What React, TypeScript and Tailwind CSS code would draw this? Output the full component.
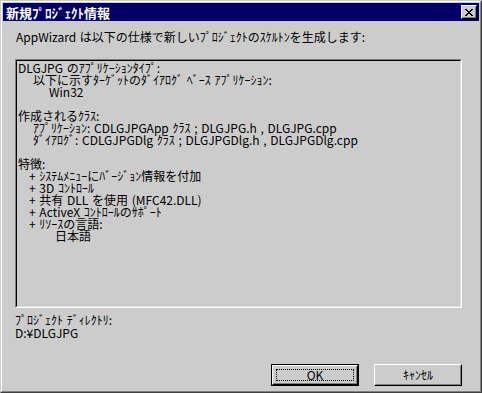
import React from "react";

const Line = ({ children, indent = 0 }: { children?: React.ReactNode; indent?: number }) => (
  <div className="h-[12px] leading-[12px] whitespace-pre" style={indent ? { paddingLeft: indent } : undefined}>
    {children}
  </div>
);

export default function App() {
  return (
    <div className="w-[482px] h-[393px] bg-[#cccccc] [font-family:'Liberation_Sans_Narrow','Noto_Sans_CJK_JP',sans-serif] text-[12px] text-black">
      <div className="w-full h-full border border-t-[#cccccc] border-l-[#cccccc] border-b-[#404040] border-r-[#404040]">
        <div className="w-full h-full border border-t-white border-l-white border-b-[#808080] border-r-[#808080] p-px flex flex-col">
          {/* Title bar */}
          <div className="h-[18px] bg-[#000066] flex items-center pl-[3px] pr-[2px]">
            <span className="text-white font-bold text-[13px] leading-[13px] flex-1 [font-family:'Noto_Sans_CJK_JP',sans-serif]">新規ﾌﾟﾛｼﾞｪｸﾄ情報</span>
            <div className="w-[16px] h-[14px] border border-t-white border-l-white border-b-black border-r-black bg-[#cccccc]">
              <div className="w-full h-full border border-t-[#cccccc] border-l-[#cccccc] border-b-[#808080] border-r-[#808080] flex items-center justify-center">
                <svg width="8" height="7" viewBox="0 0 8 7" shapeRendering="crispEdges">
                  <path d="M0 0h2v1H0zM6 0h2v1H6zM1 1h2v1H1zM5 1h2v1H5zM2 2h4v1H2zM3 3h2v1H3zM2 4h4v1H2zM1 5h2v1H1zM5 5h2v1H5zM0 6h2v1H0zM6 6h2v1H6z" fill="black" />
                </svg>
              </div>
            </div>
          </div>

          {/* Body */}
          <div className="flex-1 flex flex-col pl-[12px] pr-[17px]">
            <div className="mt-[10px] ml-[1px] h-[12px] leading-[12px] whitespace-pre [word-spacing:1px]">
              AppWizard は以下の仕様で新しいﾌﾟﾛｼﾞｪｸﾄのｽｹﾙﾄﾝを生成します:
            </div>

            <div className="mt-[16px] h-[249px] border border-t-[#808080] border-l-[#808080] border-b-white border-r-white">
              <div className="w-full h-full border border-t-black border-l-black border-b-[#dfdfdf] border-r-[#dfdfdf] pl-[1px] pt-[1px] [word-spacing:1px]">
                <Line>DLGJPG のｱﾌﾟﾘｹｰｼｮﾝﾀｲﾌﾟ:</Line>
                <Line indent={15}>以下に示すﾀｰｹﾞｯﾄのﾀﾞｲｱﾛｸﾞ ﾍﾞｰｽ ｱﾌﾟﾘｹｰｼｮﾝ:</Line>
                <Line indent={31}>Win32</Line>
                <Line />
                <Line>作成されるｸﾗｽ:</Line>
                <Line indent={15}>ｱﾌﾟﾘｹｰｼｮﾝ: CDLGJPGApp ｸﾗｽ ; DLGJPG.h , DLGJPG.cpp</Line>
                <Line indent={15}>ﾀﾞｲｱﾛｸﾞ: CDLGJPGDlg ｸﾗｽ ; DLGJPGDlg.h , DLGJPGDlg.cpp</Line>
                <Line />
                <Line>特徴:</Line>
                <Line indent={11}>+ ｼｽﾃﾑﾒﾆｭｰにﾊﾞｰｼﾞｮﾝ情報を付加</Line>
                <Line indent={11}>+ 3D ｺﾝﾄﾛｰﾙ</Line>
                <Line indent={11}>+ 共有 DLL を使用 (MFC42.DLL)</Line>
                <Line indent={11}>+ ActiveX ｺﾝﾄﾛｰﾙのｻﾎﾟｰﾄ</Line>
                <Line indent={11}>+ ﾘｿｰｽの言語:</Line>
                <Line indent={37}>日本語</Line>
              </div>
            </div>

            <div className="mt-[5px] h-[13px] leading-[13px] whitespace-pre [word-spacing:1px]">ﾌﾟﾛｼﾞｪｸﾄ ﾃﾞｨﾚｸﾄﾘ:</div>
            <div className="h-[13px] leading-[13px] whitespace-pre">D:¥DLGJPG</div>

            <div className="mt-[25px] flex justify-end gap-[15px]">
              {/* OK default button */}
              <div className="w-[88px] h-[22px] border border-black">
                <div className="w-full h-full border border-t-white border-l-white border-b-black border-r-black">
                  <div className="w-full h-full border border-t-[#cccccc] border-l-[#cccccc] border-b-[#808080] border-r-[#808080] p-[2px]">
                    <div className="w-full h-full border border-dotted border-black flex items-center justify-center leading-[12px]">
                      OK
                    </div>
                  </div>
                </div>
              </div>
              {/* Cancel button */}
              <div className="w-[88px] h-[22px] border border-t-white border-l-white border-b-black border-r-black">
                <div className="w-full h-full border border-t-[#cccccc] border-l-[#cccccc] border-b-[#808080] border-r-[#808080] flex items-center justify-center leading-[12px]">
                  ｷｬﾝｾﾙ
                </div>
              </div>
            </div>
          </div>
        </div>
      </div>
    </div>
  );
}
